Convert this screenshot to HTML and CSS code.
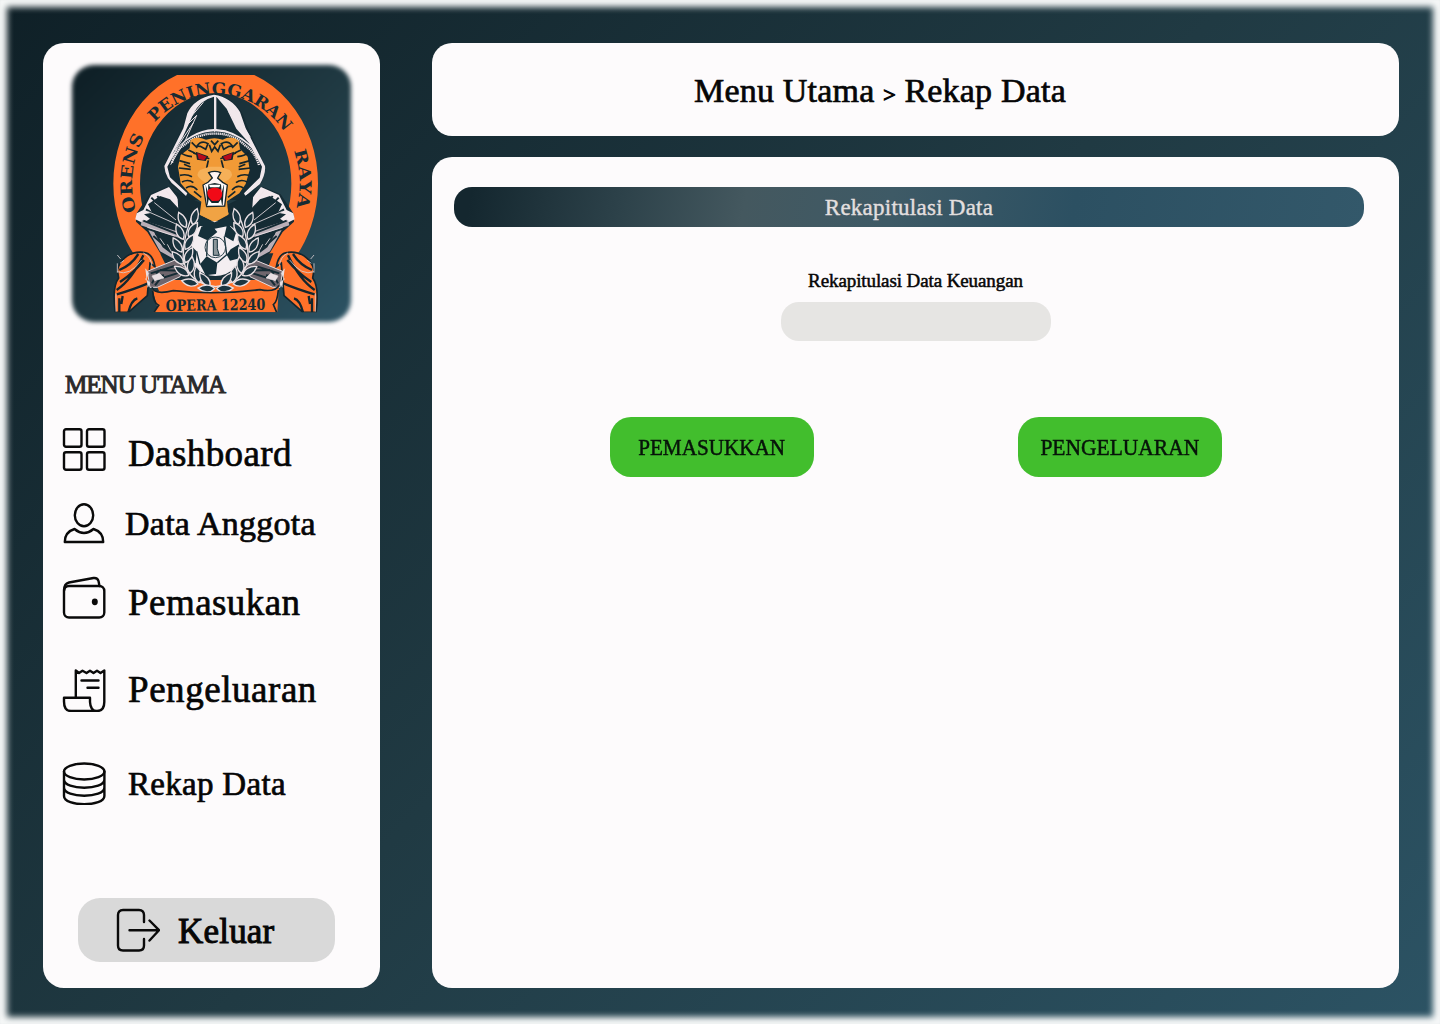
FILE: index.html
```html
<!DOCTYPE html>
<html lang="id">
<head>
<meta charset="utf-8">
<title>Rekap Data</title>
<link rel="stylesheet" href="styles.css">
</head>
<body>
<div class="page">
  <aside class="sidebar">
    <div class="logo">
      <svg viewBox="21 30 867 801" width="289" height="267">
        <defs>
          <clipPath id="frame"><rect x="150" y="75" width="640" height="712"/></clipPath>
          <path id="arc" d="M229 484 A251 268 0 1 1 706 484"/>
          <g id="ribbon">
            <path d="M250 607 C215 603 183 622 172 660 L176 684 C160 705 160 745 166 787 L205 787 L262 737 L270 640 L285 650 C280 620 268 608 250 607Z" fill="#ff7129" stroke="#13262e" stroke-width="5"/>
            <path d="M170 720 Q215 690 250 616 M170 733 Q222 718 264 700 M178 660 Q214 645 235 612 M180 696 Q220 670 252 630 M205 787 Q214 750 232 745 M178 745 v42 M188 738 l-4 24" fill="none" stroke="#13262e" stroke-width="7"/>
            <path d="M172 665 Q208 680 245 630 M172 615 l10 12 M168 730 v55 M250 609 Q274 620 276 650 M180 640 l12 -9 M172 640 v28" fill="none" stroke="#d9cfd2" stroke-width="2.5"/>
          </g>
          <g id="shoulder">
            <path d="M322 410 L268 433 L230 490 L228 515 L262 546 L300 608 L350 642 L430 600 L440 470 L350 425Z" fill="#152b34"/>
            <path d="M327 411 L273 435 L250 480 L230 490 L226 508 L250 520 L270 506 L252 493 L276 488 L264 463 L300 438 L330 448 L385 507 L350 440Z" fill="#f3e9ed"/>
            <path d="M246 510 L357 546 L358 564 L242 526Z M265 540 L300 604 L352 632 L348 622 L308 592 L282 546Z" fill="#b9aeb6"/>
            <path d="M274 443 L300 470 L350 522 M258 478 L355 536 M292 438 L340 500 M270 465 l54 42 M250 512 L352 552 M286 552 q28 -4 34 18 q24 5 20 24 q22 8 20 32 M280 558 L346 616" fill="none" stroke="#152b34" stroke-width="6"/>
            <path d="M283 458 L348 510 M262 484 L355 525 M318 422 L365 483 M300 565 l14 20 M322 583 l12 22 M262 532 L344 558" fill="none" stroke="#efe5e9" stroke-width="2.5"/>
            <path d="M262 664 L345 630 L378 654 L360 680 L292 712 L270 712Z" fill="#6f666d" stroke="#e5dade" stroke-width="3"/>
            <path d="M272 670 l72 -22 M288 690 l70 -22 M276 700 l20 -40 M285 706 l14 -18 M300 660 l62 2 M280 682 l32 -6" stroke="#152b34" stroke-width="6" fill="none"/>
            <path d="M276 678 l22 -8 l14 14 l-28 8Z M256 656 l10 14 l-9 18 l13 10 l-7 14" fill="#e9dfe3" stroke="#e9dfe3" stroke-width="2"/>
          </g>
          <path id="leaf" d="M0 0 C-14 -12 -15 -32 0 -50 C13 -32 13 -12 0 0Z" fill="#1b3540" stroke="#e8dfe3" stroke-width="4"/>
          <g id="laurel">
            <path d="M468 710 Q385 700 370 630 Q366 560 405 480" fill="none" stroke="#e8dfe3" stroke-width="4"/>
            <use href="#leaf" transform="translate(398 524) rotate(16)"/>
            <use href="#leaf" transform="translate(378 532) rotate(-26)"/>
            <use href="#leaf" transform="translate(386 560) rotate(32)"/>
            <use href="#leaf" transform="translate(370 568) rotate(-24)"/>
            <use href="#leaf" transform="translate(376 598) rotate(30)"/>
            <use href="#leaf" transform="translate(366 606) rotate(-32)"/>
            <use href="#leaf" transform="translate(376 638) rotate(25)"/>
            <use href="#leaf" transform="translate(370 642) rotate(-42)"/>
            <use href="#leaf" transform="translate(390 670) rotate(8)"/>
            <use href="#leaf" transform="translate(386 676) rotate(-58)"/>
            <use href="#leaf" transform="translate(418 698) rotate(-10)"/>
            <use href="#leaf" transform="translate(414 702) rotate(-78)"/>
            <use href="#leaf" transform="translate(450 708) rotate(-38)"/>
            <use href="#leaf" transform="translate(464 716) rotate(-88)"/>
          </g>
          <path id="stripes" d="M362 308 Q374 318 396 320 M358 332 L390 341 M357 354 L392 358 M360 376 Q380 371 396 380 M366 396 Q385 386 400 398 M378 414 Q396 402 412 420 M385 300 L404 309 M395 277 L412 294 M402 424 L424 442 M372 343 l20 8"/>
        </defs>
        <g clip-path="url(#frame)">
          <ellipse cx="467" cy="401" rx="267" ry="312" fill="none" stroke="#ff7129" stroke-width="80"/>
          <path d="M262 640 L670 640 L640 730 L300 730Z" fill="#ff7129"/>
          <path d="M300 610 L640 610 L610 690 L340 690Z" fill="#193039"/>
          <use href="#ribbon"/>
          <use href="#ribbon" transform="matrix(-1 0 0 1 934 0)"/>
          <!-- hooded robe -->
          <path d="M464 132 C405 142 382 178 372 220 L314 350 L328 400 L385 450 L555 450 L606 396 L616 350 L558 220 C548 176 515 142 464 132Z" fill="#152b34"/>
          <path d="M462 134 Q402 145 382 190 L370 235 L313 348 Q315 386 350 412 L378 438 L382 430 L330 382 L322 350 L352 296 Q402 246 464 244 Q528 246 576 296 L606 350 L599 383 L552 430 L556 438 L600 402 Q618 370 615 348 L557 235 L540 186 Q514 142 462 134Z" fill="#f1e8ec"/>
          <path d="M462 140 Q420 150 400 192 L368 262 L336 314 Q388 240 462 237Z M469 140 L500 176 L529 236 L572 284 Q524 240 469 237Z" fill="#172e37"/>
          <path d="M464 142 V246 M389 205 L430 157 M376 230 L410 196 L376 271 M346 300 L400 218 M332 344 L375 271 M499 154 L545 228 L591 324 M526 180 L570 268 M507 187 L544 242" fill="none" stroke="#eee4e8" stroke-width="3"/>
          <path d="M508 176 L534 190 L548 224 L574 264 L548 241 L526 228 L532 210Z" fill="#f1e8ec"/>
          <path d="M336 338 Q345 300 372 286 Q412 250 465 251 Q520 250 555 286 Q584 304 597 345" fill="none" stroke="#eee4e8" stroke-width="7" stroke-dasharray="4 2"/>
          <use href="#shoulder"/>
          <use href="#shoulder" transform="matrix(-1 0 0 1 930 0)"/>
          <path d="M352 430 L430 462 L512 462 L580 430 L570 570 L360 570Z" fill="#152b34"/>
          <!-- tiger -->
          <path d="M392 270 Q410 257 438 269 Q464 260 488 269 Q515 255 536 272 L540 297 L563 320 L569 360 L557 402 L538 430 L501 454 L505 494 L464 517 L419 494 L424 455 L388 430 L362 400 L354 350 L362 315 L389 295Z" fill="#f19a36"/>
          <path d="M430 470 L500 470 L506 492 L464 515 L420 494Z" fill="#f0a344"/>
          <g fill="none" stroke="#14252a" stroke-width="5">
            <use href="#stripes"/>
            <use href="#stripes" transform="matrix(-1 0 0 1 928 0)"/>
            <path d="M411 288 Q424 269 444 281 L437 298 L421 289Z M517 288 Q504 269 484 281 L491 298 L507 289Z M448 284 L455 304 L464 291 L474 304 L481 284 M453 272 L464 284 L475 272 M400 309 L448 326 M528 309 L481 326 M445 331 L440 354 M484 331 L490 354"/>
          </g>
          <path d="M407 305 L445 319 L437 333 L411 329Z M522 305 L485 319 L492 333 L518 329Z" fill="#14252a"/>
          <path d="M412 309 L440 320 L432 331 L416 327Z M517 309 L489 320 L497 331 L513 327Z" fill="#b90a1b"/>
          <path d="M422 388 Q404 374 420 360 L448 350 L480 350 L509 360 Q524 374 507 388 L490 398 L436 398Z" fill="#f6b058"/>
          <path d="M446 368 Q464 360 482 368 L473 384 L488 397 L502 405 L494 468 L440 470 L429 405 L444 397 L457 384Z" fill="#fff5f4" stroke="#14252a" stroke-width="4"/>
          <path d="M437 405 L464 399 L492 405 L488 465 L442 466Z" fill="#14252a"/>
          <path d="M443 420 Q464 405 485 420 Q491 440 476 452 L456 453 Q438 438 443 420Z" fill="#f10a17"/>
          <path d="M436 402 l9 0 l-1 24Z M492 402 l-9 0 l2 26Z M443 466 l3 -18 l9 11 l20 0 l8 -11 l3 18Z M447 404 l34 0 l-3 8 l-28 0Z" fill="#fff"/>
          <!-- football -->
          <circle cx="466" cy="596" r="82" fill="#f4eef1"/>
          <path d="M424 530 L454 525 L472 546 L442 571 L414 558Z M502 520 L528 548 L520 574 L493 559Z M384 578 L410 604 L407 640 L387 630Z M440 619 L472 638 L468 672 L437 676 L420 643Z M512 598 L537 583 L542 624 L510 632 L500 614Z M414 500 L464 517 L513 500 L520 525 L464 536 L408 525Z" fill="#15303a"/>
          <path d="M442 571 L440 619 M493 559 L500 614 M472 638 L500 614 M410 604 L420 643" stroke="#15303a" stroke-width="4"/>
          <circle cx="466" cy="592" r="31" fill="none" stroke="#2b434c" stroke-width="3"/>
          <path d="M460 568 h12 v28 l6 20 h-18Z" fill="#8b9599" stroke="#15303a" stroke-width="3"/>
          <use href="#laurel"/>
          <use href="#laurel" transform="matrix(-1 0 0 1 934 0)"/>
          <path d="M276 712 Q284 730 330 726 Q466 742 610 724 Q644 728 657 706 L652 787 L280 787 L292 772Z" fill="#ff7129"/>
          <path d="M276 712 Q284 736 340 722 Q466 736 600 719 Q646 728 657 706 M278 722 Q280 760 296 766 L282 787 M655 720 Q652 756 640 764 L650 787" fill="none" stroke="#13262e" stroke-width="5"/>
        </g>
        <g class="crest-text">
          <text><textPath href="#arc" startOffset="0" textLength="232" lengthAdjust="spacingAndGlyphs">ORENS</textPath></text>
          <text><textPath href="#arc" startOffset="284" textLength="452" lengthAdjust="spacingAndGlyphs">PENINGGARAN</textPath></text>
          <text><textPath href="#arc" startOffset="800" textLength="172" lengthAdjust="spacingAndGlyphs">RAYA</textPath></text>
          <text class="crest-foot" x="317" y="781" textLength="299" lengthAdjust="spacingAndGlyphs" transform="rotate(-.8 466 780)">OPERA 12240</text>
        </g>
      </svg>
    </div>
    <h2 class="menu-title">MENU UTAMA</h2>
    <nav class="menu">
      <a class="item dashboard">
        <svg class="icon" viewBox="0 0 44 44"><rect x="2" y="2.2" width="17.5" height="17.5" rx="2"/><rect x="25" y="2.2" width="17.5" height="17.5" rx="2"/><rect x="2" y="25.2" width="17.5" height="17.5" rx="2"/><rect x="25" y="25.2" width="17.5" height="17.5" rx="2"/></svg>
        <span>Dashboard</span>
      </a>
      <a class="item anggota">
        <svg class="icon" viewBox="0 0 44 44"><ellipse cx="22" cy="14.3" rx="9.2" ry="11"/><path d="M12.5 28 Q22 36 31.5 28 Q41.2 31 41.2 41 H2.8 Q2.8 31 12.5 28Z"/></svg>
        <span>Data Anggota</span>
      </a>
      <a class="item pemasukan">
        <svg class="icon" viewBox="0 0 44 44"><rect x="2" y="11" width="40.3" height="31.500" rx="5"/><path d="M2.2 15 Q2 9 7 7.500 L31.500 3 Q35.500 2.500 36.500 6 L37.500 11"/><ellipse class="dot" cx="32.800" cy="26.800" rx="3" ry="3.400"/></svg>
        <span>Pemasukan</span>
      </a>
      <a class="item pengeluaran">
        <svg class="icon" viewBox="0 0 44 44"><path d="M13.800 29.500 V2.500 L17 5 L20.500 2.700 L24.500 5 L28 2.700 L31.500 5 L35 2.700 L38.500 5 L42.300 2.500 V34 Q42.300 43 35 43 H9 Q2 43 2 33.500 V29.800 H28 V34 Q28.500 43 35 43 M19.500 12.500 H36.500 M25.500 19.800 H36.500"/></svg>
        <span>Pengeluaran</span>
      </a>
      <a class="item rekap">
        <svg class="icon" viewBox="0 0 44 44"><ellipse cx="22.200" cy="10.500" rx="20.200" ry="8"/><path d="M2 10.500 V35 C2 46 42.400 46 42.400 35 V10.500 M2 18.500 C2 29.500 42.400 29.500 42.400 18.500 M2 26.500 C2 37.500 42.400 37.500 42.400 26.500"/></svg>
        <span>Rekap Data</span>
      </a>
    </nav>
    <button class="logout">
      <svg class="icon" viewBox="0 0 44 44"><path d="M28 14 V7 Q28 2 23 2 H7 Q2 2 2 7 V37.500 Q2 42.500 7 42.500 H23 Q28 42.500 28 37.500 V31 M13.500 22.200 H42.500 M33.500 12.500 L43 22.200 L33.500 32.500"/></svg>
      <span>Keluar</span>
    </button>
  </aside>
  <main class="main">
    <header class="topbar"><h1>Menu Utama <span class="sep">&gt;</span> Rekap Data</h1></header>
    <section class="panel">
      <h2 class="banner">Rekapitulasi Data</h2>
      <label class="field-label" for="rekap">Rekapitulasi Data Keuangan</label>
      <input class="field" id="rekap" type="text">
      <div class="actions">
        <button class="action"><span class="in">PEMASUKKAN</span></button>
        <button class="action"><span class="out">PENGELUARAN</span></button>
      </div>
    </section>
  </main>
</div>
</body>
</html>
```
FILE: styles.css
```css
* { box-sizing: border-box; margin: 0; }

body {
  font-family: "Liberation Serif", serif;
  color: #060606;
  -webkit-text-stroke: 0.7px currentColor;
}

.page {
  display: flex;
  gap: 52px;
  width: 1440px;
  height: 1024px;
  padding: 43px 41px 36px 43px;
  background: linear-gradient(135deg, #0f2027 0%, #203a43 50%, #2c5364 100%);
  box-shadow: inset 0 0 6px 7px #f6f8f8;
}

.sidebar {
  display: flex;
  flex-direction: column;
  width: 337px;
  padding-top: 17px;
  border-radius: 21px;
  background: #fdfbfc;
}

.logo {
  display: grid;
  width: 289px;
  height: 267px;
  margin-left: 24px;
  isolation: isolate;
}

/* soft-edged backdrop of the crest */
.logo::before {
  content: "";
  grid-area: 1 / 1;
  z-index: -1;
  margin: 5px;
  border-radius: 22px;
  background: linear-gradient(135deg, #0f2027 5%, #203a43 55%, #2c5364 100%);
  filter: blur(2.2px);
}

.logo svg { display: block; grid-area: 1 / 1; }

.crest-text {
  font-family: "DejaVu Serif", serif;
  font-size: 49px;
  font-weight: bold;
  fill: #172b33;
  -webkit-text-stroke: 0;
}

.crest-foot { font-size: 46px; }

.menu-title {
  margin: 43px 0 0 22px;
  font-size: 25px;
  font-weight: normal;
  line-height: 30px;
  letter-spacing: -0.95px;
  color: #2b2a2b;
  -webkit-text-stroke-width: 1px;
}

.menu { margin: 27px 0 0 19px; }

.item {
  display: flex;
  align-items: center;
  height: 44px;
  gap: 22px;
  font-size: 37px;
  line-height: 44px;
  white-space: nowrap;
}

.icon {
  flex: none;
  width: 44px;
  height: 44px;
  fill: none;
  stroke: #0a0a0a;
  stroke-width: 2.4;
  stroke-linecap: round;
  stroke-linejoin: round;
}

.dot { fill: #0a0a0a; stroke: none; }

.dashboard { letter-spacing: 0.4px; }
.dashboard span { margin-top: 10px; }
.anggota { margin-top: 30px; gap: 19px; font-size: 34px; letter-spacing: 0.25px; }
.anggota span { margin-top: 2px; }
.pemasukan { margin-top: 30px; letter-spacing: 0.45px; }
.pemasukan span { margin-top: 11px; }
.pengeluaran { margin-top: 49px; letter-spacing: 0.55px; }
.pengeluaran span { margin-top: -1px; }
.rekap { margin-top: 49px; font-size: 33px; letter-spacing: 0.3px; }
.rekap span { margin-top: 2px; }

.logout {
  display: flex;
  align-items: center;
  gap: 18px;
  width: 257px;
  height: 64px;
  margin: 93px 0 0 35px;
  padding: 0 0 0 38px;
  border: 0;
  border-radius: 22px;
  background: #d9d9d9;
  color: inherit;
  font: 35px "Liberation Serif", serif;
  letter-spacing: 0.2px;
  -webkit-text-stroke: 1px currentColor;
}

.logout span { margin-top: 3px; }

.main {
  display: flex;
  flex: 1;
  flex-direction: column;
  gap: 21px;
}

.topbar {
  display: flex;
  align-items: center;
  justify-content: center;
  height: 93px;
  padding: 3px 71px 0 0;
  border-radius: 20px;
  background: #fdfbfc;
}

.topbar h1 {
  font-size: 34px;
  font-weight: normal;
  letter-spacing: 0.2px;
  white-space: nowrap;
}

.sep { font-size: 22px; -webkit-text-stroke-width: 1.2px; }

.panel {
  display: flex;
  flex: 1;
  flex-direction: column;
  align-items: center;
  padding: 30px 35px 0 22px;
  border-radius: 20px;
  background: #fdfbfc;
}

.banner {
  align-self: stretch;
  height: 40px;
  border-radius: 18px;
  background: linear-gradient(100deg, #14272f 2%, #2c4149 18%, #44585f 32%, #3e5a66 48%, #2c5062 68%, #33586a 100%);
  color: #e2dfdf;
  font-size: 23px;
  font-weight: normal;
  line-height: 41px;
  letter-spacing: 0.25px;
  text-align: center;
  -webkit-text-stroke-width: 0.4px;
}

.field-label {
  margin: 42px 0 0 13px;
  font-size: 19px;
  line-height: 24px;
  letter-spacing: -0.1px;
  -webkit-text-stroke-width: 0.5px;
}

.field {
  width: 270px;
  height: 39px;
  margin: 9px 0 0 13px;
  border: 0;
  border-radius: 18px;
  background: #e6e5e3;
}

.actions {
  display: flex;
  gap: 204px;
  margin: 76px 0 0 13px;
}

.action {
  display: flex;
  align-items: center;
  justify-content: center;
  width: 204px;
  height: 60px;
  padding: 1px 0 0;
  border: 0;
  border-radius: 21px;
  background: #42be2d;
  color: #07140a;
  font: 23.5px "Liberation Serif", serif;
  -webkit-text-stroke: 0.5px currentColor;
}

.in { transform: scaleX(0.9); }
.out { transform: scaleX(0.915); }
```
